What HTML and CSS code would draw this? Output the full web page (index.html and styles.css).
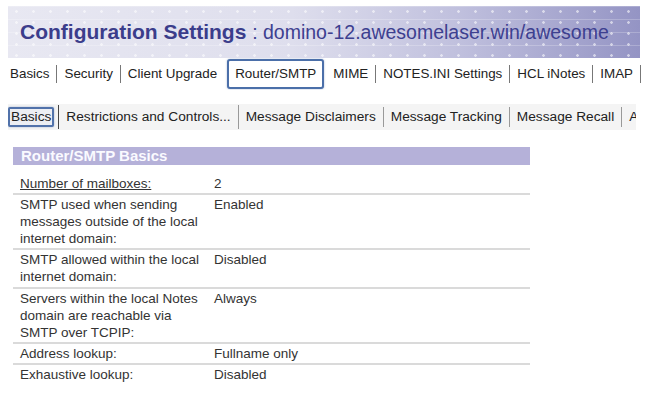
FILE: index.html
```html
<!DOCTYPE html>
<html lang="en">
  <head>
    <meta charset="UTF-8" />
    <meta name="viewport" content="width=device-width, initial-scale=1.0" />
    <title>Configuration Settings</title>
    <link rel="stylesheet" href="styles.css">
  </head>
  <body>
    <div class="banner">
      <h1 class="title">Configuration Settings <span class="server">: domino-12.awesomelaser.win/awesome</span></h1>
    </div>

    <div class="tabs main-tabs">
      <span class="tab first">Basics</span>
      <span class="tab">Security</span>
      <span class="tab no-sep">Client Upgrade</span>
      <span class="tab current">Router/SMTP</span>
      <span class="tab">MIME</span>
      <span class="tab">NOTES.INI Settings</span>
      <span class="tab">HCL iNotes</span>
      <span class="tab">IMAP</span>
    </div>

    <div class="tabs sub-tabs">
      <span class="tab current">Basics</span>
      <span class="tab divider">Restrictions and Controls...</span>
      <span class="tab">Message Disclaimers</span>
      <span class="tab">Message Tracking</span>
      <span class="tab">Message Recall</span>
      <span class="tab">Advanced</span>
    </div>

    <div class="section">
      <div class="section-title">Router/SMTP Basics</div>
      <table class="settings">
        <tr>
          <td class="label"><u>Number of mailboxes:</u></td>
          <td>2</td>
        </tr>
        <tr>
          <td class="label">SMTP used when sending messages outside of the local internet domain:</td>
          <td>Enabled</td>
        </tr>
        <tr>
          <td class="label">SMTP allowed within the local internet domain:</td>
          <td>Disabled</td>
        </tr>
        <tr>
          <td class="label">Servers within the local Notes domain are reachable via SMTP over TCPIP:</td>
          <td>Always</td>
        </tr>
        <tr>
          <td class="label">Address lookup:</td>
          <td>Fullname only</td>
        </tr>
        <tr>
          <td class="label">Exhaustive lookup:</td>
          <td>Disabled</td>
        </tr>
      </table>
    </div>
  </body>
</html>
```

FILE: styles.css
```css
body {
  font-family: "Liberation Sans", Arial, sans-serif;
  margin: 0;
  padding: 6px 8px 0 8px;
  background-color: white;
  color: #222;
}

/* header strip with the faint circuit-board look */
.banner {
  height: 52px;
  display: flex;
  align-items: center;
  padding-left: 12px;
  overflow: hidden;
  background-color: #cfd0e6;
  background-image:
    radial-gradient(circle, rgba(255, 255, 255, 0.55) 1px, transparent 1.6px),
    repeating-linear-gradient(0deg, transparent 0 12px, rgba(255, 255, 255, 0.22) 12px 13px),
    linear-gradient(90deg, #e8e8f2 0%, #dedeed 45%, #bfbfdd 72%, #9494c4 100%);
  background-size: 17px 11px, auto, auto;
}

.title {
  margin: 0;
  font-size: 21px;
  line-height: 22px;
  font-weight: bold;
  color: #3b3d8b;
  white-space: nowrap;
}

.server {
  font-size: 19.5px;
  font-weight: normal;
  color: #3d4090;
}

.tabs {
  display: flex;
  align-items: center;
  white-space: nowrap;
  overflow: hidden;
}

.main-tabs {
  height: 32px;
  width: 633px;
  font-size: 13.4px;
}

.main-tabs .tab {
  padding: 0 7px;
  line-height: 18px;
  border-right: 1px solid #777;
}

.main-tabs .first {
  padding-left: 2px;
}

.main-tabs .no-sep {
  border-right: none;
}

.main-tabs .current {
  height: 30px;
  box-sizing: border-box;
  display: flex;
  align-items: center;
  margin: 0 2px 0 3px;
  padding: 0 6px;
  border: 2px solid #4b6fa9;
  border-radius: 3px;
  background-color: white;
  box-shadow: 0 0 2px rgba(75, 111, 169, 0.5);
}

.sub-tabs {
  margin-top: 14px;
  height: 26px;
  width: 628px;
  font-size: 13.7px;
  background-color: #f4f4f4;
}

.sub-tabs .tab {
  padding: 0 7px;
  line-height: 20px;
  border-right: 1px solid #999;
}

.sub-tabs .current {
  padding: 0 1px;
  line-height: 16px;
  border: 2px solid #5172aa;
  border-radius: 2px;
  background-color: #eceef3;
  box-shadow: 0 0 2px rgba(75, 111, 169, 0.5);
}

.sub-tabs .divider {
  margin-left: 4px;
  padding-left: 7px;
  line-height: 24px;
  border-left: 1px solid #444;
}

.section {
  margin: 17px 0 0 5px;
  width: 517px;
}

.section-title {
  height: 18px;
  line-height: 18px;
  padding-left: 8px;
  font-size: 15px;
  font-weight: bold;
  color: #fafaff;
  background-color: #b5b1d9;
}

.settings {
  width: 100%;
  margin-top: 9px;
  border-collapse: collapse;
  font-size: 13.5px;
  color: #333;
}

.settings td {
  vertical-align: top;
  padding: 1px 0 1px 7px;
  line-height: 17px;
  border-bottom: 2px solid #dadada;
}

.settings tr:nth-child(3) td {
  padding-bottom: 2px;
}

.settings tr:last-child td {
  border-bottom: none;
}

.settings .label {
  width: 182px;
  padding-right: 5px;
}
```
